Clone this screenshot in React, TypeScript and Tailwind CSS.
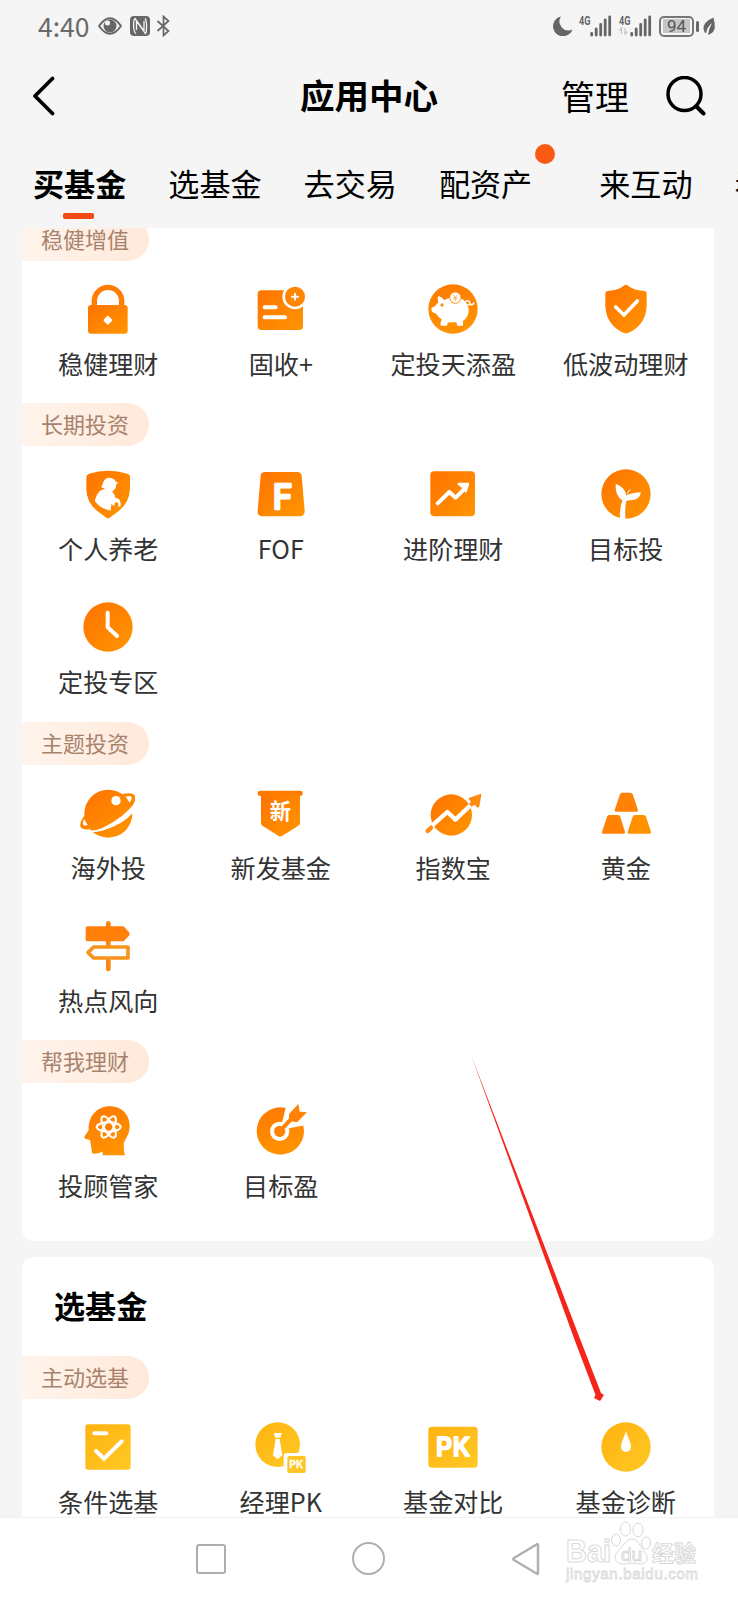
import React from 'react';

type Item = { label: string; icon: React.ReactNode };
type Section = { title: string; items: Item[] };

const ORANGE = 'url(#orange)';
const YELLOW = 'url(#yellow)';

/* ── Icons (all drawn around 0,0 in a 180 unit box) ─────────── */

const Icon = ({ children }: { children: React.ReactNode }) => (
  <svg viewBox="-90 -90 180 180" className="h-[60px] w-[60px] shrink-0 overflow-visible">
    {children}
  </svg>
);

const LockIcon = () => (
  <Icon>
    <path d="M-41 -4V-24a41 41 0 0 1 82 0V-4" fill="none" stroke="#ff7d05" strokeWidth="16" />
    <rect x="-60" y="-12" width="119" height="86" rx="9" fill={ORANGE} />
    <rect x="-11" y="23" width="21" height="21" rx="5" fill="#fff" transform="rotate(45 -0.5 33.5)" />
  </Icon>
);

const FixedIncomeIcon = () => (
  <Icon>
    <rect x="-70" y="-56" width="136" height="119" rx="11" fill={ORANGE} />
    <circle cx="42" cy="-37" r="38" fill="#fff" />
    <circle cx="42" cy="-37" r="30" fill="#ff8503" />
    <path d="M33 -37H51M42 -46V-28" stroke="#fff" strokeWidth="6" strokeLinecap="round" />
    <path d="M-49 -5H-16M-49 25H12" stroke="#fff" strokeWidth="12" strokeLinecap="round" />
  </Icon>
);

const PiggyIcon = () => (
  <Icon>
    <circle r="74" fill="url(#orangeDown)" />
    <path
      d="M-45 -39Q-35 -37 -26 -27Q-10 -36 8 -35Q34 -33 43 -12Q54 10 37 30L30 36L30 50H13L10 40H-10L-16 42L-18 50H-36L-38 44L-34 31Q-44 24 -50 15L-62 9Q-67 2 -64 -4L-54 -8Q-49 -15 -44 -20Q-47 -29 -45 -39Z"
      fill="#fff"
    />
    <path d="M38 -22Q46 -28 50 -20Q51 -12 44 -12M50 -14Q58 -11 63 -18" fill="none" stroke="#fff" strokeWidth="4.5" strokeLinecap="round" />
    <circle cx="-33" cy="-12" r="5" fill="#ff8a12" />
    <circle cx="7" cy="-34" r="17" fill="#fff" stroke="#ff8a12" strokeWidth="3" />
    <path d="M1 -42L7 -35L13 -42M7 -35V-25M1 -34H13M1 -30H13" fill="none" stroke="#ffab4a" strokeWidth="2.5" />
  </Icon>
);

const ShieldIcon = () => (
  <Icon>
    <path
      d="M-5 -71Q0 -74 5 -71Q20 -56 55 -54Q62 -53 62 -47V-10Q60 47 8 71Q0 75 -8 71Q-60 47 -62 -10V-47Q-62 -53 -55 -54Q-20 -56 -5 -71Z"
      fill={ORANGE}
    />
    <path d="M-31 -6L-6 18L34 -24" fill="none" stroke="#fff" strokeWidth="11" strokeLinecap="round" />
  </Icon>
);

const PensionIcon = () => (
  <Icon>
    <path
      d="M-57 -61Q0 -78 58 -61Q66 -59 66 -50V-14Q64 30 24 57L5 71Q0 74 -5 71L-24 57Q-64 30 -65 -14V-50Q-65 -58 -57 -61Z"
      fill={ORANGE}
    />
    <path
      d="M-20 -20L-15 -34Q-8 -51 9 -48Q20 -46 24 -37L32 -33L24 -29Q26 -17 18 -12L12 -7Q20 -2 22 12L31 14Q39 20 38 37L31 38V28L25 24L19 29V37L10 30L8 50L-6 46Q-28 38 -40 20Q-36 2 -24 -10L-9 -16Z"
      fill="#fff"
    />
  </Icon>
);

const FofIcon = () => (
  <Icon>
    <path
      d="M-48 -66H49Q60 -66 62 -55L71 50Q72 67 56 67H-56Q-72 67 -70 50L-61 -55Q-60 -66 -48 -66Z"
      fill={ORANGE}
    />
    <text
      x="5"
      y="45"
      textAnchor="middle"
      fill="#fff"
      stroke="#fff"
      strokeWidth="7"
      strokeLinejoin="round"
      className="font-['Inter','Noto_Sans',sans-serif] text-[101px] font-medium"
    >
      F
    </text>
  </Icon>
);

const TrendIcon = () => (
  <Icon>
    <rect x="-68" y="-68" width="134" height="135" rx="12" fill={ORANGE} />
    <path d="M-46 28L-11 -6L8 11L38 -19" fill="none" stroke="#fff" strokeWidth="12" strokeLinecap="round" strokeLinejoin="round" />
    <path d="M17 -30H45L38 -8L28 -22Z" fill="#fff" stroke="#fff" strokeWidth="7" strokeLinejoin="round" />
  </Icon>
);

const SproutIcon = () => (
  <Icon>
    <circle r="74" fill={ORANGE} />
    <path d="M-18 75Q-20 42 -10 18L2 18Q-5 44 -1 75Z" fill="#fff" />
    <path d="M-31 -31Q-34 6 -9 20Q0 21 2 7Q-2 -20 -31 -31Z" fill="#fff" />
    <path d="M45 -5Q41 19 14 19Q4 19 -3 22Q-6 2 12 0Q28 -5 45 -5Z" fill="#fff" />
    <path d="M4 -1Q6 -10 14 -13" fill="none" stroke="#fff" strokeWidth="3" />
  </Icon>
);

const ClockIcon = () => (
  <Icon>
    <circle r="74" fill={ORANGE} />
    <path d="M-1 -43V1L27 27" fill="none" stroke="#fff" strokeWidth="12" strokeLinecap="round" strokeLinejoin="round" />
  </Icon>
);

const PlanetIcon = () => (
  <Icon>
    <circle cx="1" cy="2" r="72" fill={ORANGE} />
    <path d="M-92 50Q-40 60 -4 38Q48 12 78 -30L92 -24Q62 24 15 41Q-20 56 -46 58L-92 66Z" fill="#fff" />
    <path
      d="M42 -56Q74 -64 81 -51Q86 -28 56 -5Q20 26 -26 43Q-66 54 -80 46Q-91 30 -66 2L-58 26L-62 36Q-20 34 28 4Q60 -18 70 -42L56 -44Z"
      fill={ORANGE}
    />
    <path d="M-72 18Q-78 31 -73 37Q-68 39 -61 36Z" fill="#fff" />
    <path d="M52 -49Q68 -53 71 -48Q73 -42 66 -34Q60 -42 52 -49Z" fill="#fff" />
    <circle cx="24" cy="-37" r="14" fill="#fff" />
  </Icon>
);

const NewIcon = () => (
  <Icon>
    <rect x="-70" y="-67" width="135" height="16" rx="8" fill="#ff7800" />
    <path d="M-60 -60H57V30Q57 35 52 38L3 69Q-2 72 -7 69L-56 38Q-60 35 -60 30Z" fill={ORANGE} />
    <text x="-2" y="17" textAnchor="middle" fill="#fff" className="text-[64px] font-bold">
      新
    </text>
  </Icon>
);

const IndexIcon = () => (
  <Icon>
    <circle cx="-5" cy="6" r="62" fill={ORANGE} />
    <path d="M-72 46L-17 -3L7 20L60 -30" fill="none" stroke="#fff" strokeWidth="13" strokeLinejoin="round" />
    <path d="M-76 54L-66 44" stroke="#ff8a10" strokeWidth="13" strokeLinecap="round" />
    <path d="M82 -57L49 -46Q45 -43 49 -39L54 -34L48 -27L56 -19L64 -25L72 -17Q78 -15 79 -20L85 -54Q85 -58 82 -57Z" fill="#ff8a10" />
  </Icon>
);

const GoldIcon = () => (
  <Icon>
    <path d="M-12 -61H13Q18 -61 20 -56L36 -9Q37 -4 32 -4H-30Q-35 -4 -34 -9L-18 -56Q-16 -61 -12 -61Z" fill="#ff8205" />
    <path d="M-51 6H-24Q-19 6 -17 11L-3 57Q-2 62 -7 62H-68Q-73 62 -72 57L-57 11Q-55 6 -51 6Z" fill="#ff8205" />
    <path d="M26 6H53Q58 6 60 11L75 57Q76 62 71 62H9Q4 62 5 57L20 11Q22 6 26 6Z" fill="#ff9000" />
  </Icon>
);

const SignpostIcon = () => (
  <Icon>
    <path d="M1 -68V-2M1 42V69" stroke="#fa8510" strokeWidth="14" strokeLinecap="round" />
    <path d="M-62 -59H47L63 -41Q67 -36 63 -31L47 -14H-62Q-67 -14 -67 -19V-54Q-67 -59 -62 -59Z" fill="#ff7f08" />
    <path d="M-43 3H60V36H-43L-60 20Z" fill="#fff" stroke="#f7941d" strokeWidth="11" strokeLinejoin="round" />
  </Icon>
);

const AdvisorIcon = () => (
  <Icon>
    <path
      d="M5 -74C45 -74 66 -45 65 -12C64 12 52 22 47 38Q46 55 51 73H-16V62Q-30 68 -43 68Q-49 67 -49 56L-54 27L-68 23Q-74 20 -70 16L-58 -2C-60 -45 -32 -74 5 -74Z"
      fill="url(#orangeDown)"
    />
    <g fill="none" stroke="#fff" strokeWidth="6" transform="translate(2 -12)">
      <ellipse rx="36" ry="14" />
      <ellipse rx="36" ry="14" transform="rotate(60)" />
      <ellipse rx="36" ry="14" transform="rotate(120)" />
    </g>
    <circle cx="2" cy="-12" r="9" fill="#ff8205" />
  </Icon>
);

const TargetIcon = () => (
  <Icon>
    <circle cx="-2" cy="0" r="71" fill="url(#orangeDown)" />
    <path d="M2 -20L16 -78L90 -30L72 -17L24 -8Z" fill="#fff" />
    <circle cx="-4" cy="1" r="29" fill="#fff" />
    <circle cx="-4" cy="1" r="17" fill="#ff8205" />
    <path d="M6 -9L26 -30" stroke="#fff" strokeWidth="24" />
    <path d="M-4 1L40 -46" stroke="#ff8205" strokeWidth="12" />
    <path d="M24 -30V-51L52 -81L56 -58L78 -56L48 -26Z" fill="#ff8205" />
  </Icon>
);

const ScreenIcon = () => (
  <Icon>
    <rect x="-68" y="-68" width="136" height="136" rx="9" fill={YELLOW} />
    <path d="M-41 -41H-5" stroke="#fff" strokeWidth="12" strokeLinecap="round" />
    <path d="M-36 12L-12 35L41 -17" fill="none" stroke="#fff" strokeWidth="12" strokeLinecap="round" />
  </Icon>
);

const ManagerIcon = () => (
  <Icon>
    <circle cx="-10" cy="-7" r="67" fill={YELLOW} />
    <path d="M-22 -42H2L-2 -28H-17ZM-16 -24H-4L4 25L-10 37L-24 25Z" fill="#fff" />
    <rect x="8" y="18" width="76" height="72" rx="10" fill="#fff" />
    <rect x="19" y="27" width="55" height="51" rx="5" fill="#ffc524" />
    <text
      x="46"
      y="64"
      textAnchor="middle"
      fill="#fff"
      stroke="#fff"
      className="font-['Inter','Noto_Sans',sans-serif] text-[31px] font-semibold"
    >
      PK
    </text>
  </Icon>
);

const ComparePkIcon = () => (
  <Icon>
    <rect x="-74" y="-61" width="148" height="123" rx="11" fill={YELLOW} />
    <text
      x="0"
      y="28"
      textAnchor="middle"
      textLength="102"
      fill="#fff"
      stroke="#fff"
      strokeWidth="6"
      strokeLinejoin="round"
      className="font-['Inter','Noto_Sans',sans-serif] text-[75px] font-medium"
    >
      PK
    </text>
  </Icon>
);

const DiagnoseIcon = () => (
  <Icon>
    <circle r="74" fill={YELLOW} />
    <path d="M0 -47C5 -30 15 -14 15 0A15 15 0 0 1 -15 0C-15 -14 -5 -30 0 -47Z" fill="#fff" />
  </Icon>
);

/* ── Data ───────────────────────────────────────────────────── */

const tabs = ['买基金', '选基金', '去交易', '配资产', '来互动', '看行情'];

const buySections: Section[] = [
  {
    title: '稳健增值',
    items: [
      { label: '稳健理财', icon: <LockIcon /> },
      { label: '固收+', icon: <FixedIncomeIcon /> },
      { label: '定投天添盈', icon: <PiggyIcon /> },
      { label: '低波动理财', icon: <ShieldIcon /> },
    ],
  },
  {
    title: '长期投资',
    items: [
      { label: '个人养老', icon: <PensionIcon /> },
      { label: 'FOF', icon: <FofIcon /> },
      { label: '进阶理财', icon: <TrendIcon /> },
      { label: '目标投', icon: <SproutIcon /> },
      { label: '定投专区', icon: <ClockIcon /> },
    ],
  },
  {
    title: '主题投资',
    items: [
      { label: '海外投', icon: <PlanetIcon /> },
      { label: '新发基金', icon: <NewIcon /> },
      { label: '指数宝', icon: <IndexIcon /> },
      { label: '黄金', icon: <GoldIcon /> },
      { label: '热点风向', icon: <SignpostIcon /> },
    ],
  },
  {
    title: '帮我理财',
    items: [
      { label: '投顾管家', icon: <AdvisorIcon /> },
      { label: '目标盈', icon: <TargetIcon /> },
    ],
  },
];

const pickSections: Section[] = [
  {
    title: '主动选基',
    items: [
      { label: '条件选基', icon: <ScreenIcon /> },
      { label: '经理PK', icon: <ManagerIcon /> },
      { label: '基金对比', icon: <ComparePkIcon /> },
      { label: '基金诊断', icon: <DiagnoseIcon /> },
    ],
  },
];

/* ── Parts ──────────────────────────────────────────────────── */

const Signal = ({ data }: { data?: boolean }) => (
  <svg viewBox="0 0 33 22" className="h-[22px] w-[33px] overflow-visible">
    <text x="0" y="9.5" textLength="11.5" lengthAdjust="spacingAndGlyphs" fill="#666" className="font-['Roboto',sans-serif] text-[12px] font-bold">
      4G
    </text>
    {data && <path d="M2.5 19V13L0.5 15.5M6 13V19L8.5 16.5" fill="none" stroke="#c4c4c4" strokeWidth="1.3" />}
    <path d="M12.700 18.500V20M17.200 14V20M21.700 9.500V20M26.200 5V20M30.700 2V20" stroke="#666" strokeWidth="2.8" strokeLinecap="round" />
  </svg>
);

const StatusBar = () => (
  <div className="flex h-[52px] shrink-0 items-center pl-[38px] pr-[23px] text-[#6a6a6a]">
    <span className="w-[60px] text-[26.5px] leading-none">4:40</span>
    <svg viewBox="0 0 24 18" className="h-[18px] w-6">
      <path d="M1 9Q12 -6.500 23 9Q12 24.500 1 9Z" fill="none" stroke="#666" strokeWidth="2" />
      <circle cx="12" cy="9" r="6.500" fill="#666" />
      <circle cx="9.500" cy="6" r="2.500" fill="#f5f5f5" />
    </svg>
    <svg viewBox="0 0 20 20" className="ml-2 h-5 w-5">
      <rect width="20" height="20" rx="4" fill="#666" />
      <path d="M6 17.500C3 16 3 4 5 2.500L14 15V5M15 2.500C17 5 17 15 15.500 17.500L6.500 5V14" fill="none" stroke="#f5f5f5" strokeWidth="1.300" />
    </svg>
    <svg viewBox="0 0 14 22" className="ml-[6px] h-[22px] w-[15px]">
      <path d="M1 6L12 16L7 20.500V1.500L12 6L1 16" fill="none" stroke="#666" strokeWidth="1.700" />
    </svg>
    <div className="ml-auto flex items-center">
      <svg viewBox="0 0 20 20" className="h-5 w-5">
        <path d="M8 0.500A10 10 0 1 0 19.500 13.500A9 9 0 0 1 8 0.500Z" fill="#666" />
      </svg>
      <div className="ml-[6px]"><Signal /></div>
      <div className="ml-[7px]"><Signal data /></div>
      <div className="ml-[7px] flex h-[21px] w-[35px] items-center justify-center rounded-[5px] border-2 border-[#777]">
        <span className="flex h-[14px] w-[27px] items-center justify-center bg-[#c6c6c6] font-['Roboto',sans-serif] text-[17px] leading-none text-[#555]">94</span>
      </div>
      <div className="ml-[2px] h-[11px] w-[3px] rounded bg-[#666]" />
      <svg viewBox="0 0 12 19" className="ml-1 h-[19px] w-3">
        <path d="M10.500 0.500Q0 5 0.500 12Q1 15 3 16.500Q4 10 9 6Q6 11 5 18Q11 16 11.800 11Q12 6 10.500 0.500Z" fill="#666" />
      </svg>
    </div>
  </div>
);

const Header = () => (
  <div className="flex h-[88px] shrink-0 items-center px-8">
    <svg viewBox="0 0 24 40" className="h-10 w-6">
      <path d="M20.500 2.500L3 20L20.500 37.500" fill="none" stroke="#000" strokeWidth="3.800" strokeLinecap="round" strokeLinejoin="round" />
    </svg>
    <h1 className="ml-[244px] w-[261px] pb-[3px] text-[34.500px] font-bold leading-none text-black">应用中心</h1>
    <span className="text-[34px] leading-none text-black">管理</span>
    <svg viewBox="0 0 40 40" className="ml-[37px] h-10 w-10 shrink-0">
      <circle cx="18.500" cy="18" r="16.500" fill="none" stroke="#000" strokeWidth="3.500" />
      <path d="M30.500 30.500L37.500 37.500" stroke="#000" strokeWidth="4" strokeLinecap="round" />
    </svg>
  </div>
);

const Tabs = () => (
  <div className="flex h-[88px] shrink-0 gap-[42px] overflow-hidden pl-[33px]">
    {tabs.map((tab, i) => (
      <div key={tab} className={`relative flex shrink-0 flex-col items-center pt-[21px] ${i === 4 ? 'ml-[25px]' : ''}`}>
        <span className={`text-[31.100px] leading-[44px] text-black ${i === 0 ? 'font-bold' : ''}`}>{tab}</span>
        {i === 0 && <span className="mr-[2px] mt-[8px] h-[6px] w-[31px] rounded-[2px] bg-[#f24a12]" />}
        {i === 3 && <span className="absolute right-[-23px] top-[4px] h-[20px] w-[20px] rounded-full bg-[#fa5a14]" />}
      </div>
    ))}
  </div>
);

const SectionBlock = ({ section }: { section: Section }) => (
  <section className="pb-px">
    <div className="flex h-[43px] w-[127px] items-center rounded-r-full bg-gradient-to-r from-[#fff4ec] to-[#ffe9da] pb-[3px] pl-[19px] text-[22px] leading-none text-[#a8826c]">
      {section.title}
    </div>
    <div className="grid grid-cols-4 pr-[2px] pt-[8px]">
      {section.items.map((item) => (
        <div key={item.label} className="flex h-[133.300px] flex-col items-center pt-[10px]">
          {item.icon}
          <span className="mt-[6px] whitespace-nowrap text-[25.100px] leading-9 text-[#333]">{item.label}</span>
        </div>
      ))}
    </div>
  </section>
);

const NavBar = () => (
  <nav className="relative flex h-[83px] shrink-0 items-center border-t border-[#f0f0f0] bg-white pb-px pl-[196px]">
    <span className="h-[30px] w-[30px] rounded-[3px] border-[2.5px] border-[#adadad]" />
    <span className="ml-[126px] h-[33px] w-[33px] rounded-full border-[2.5px] border-[#b0b0b0]" />
    <svg viewBox="0 0 30 34" className="ml-[126px] h-[34px] w-[30px]">
      <path d="M27 3V31Q27 32.500 25.500 31.500L3 18Q1.500 17 3 16L25.500 2.500Q27 1.500 27 3Z" fill="none" stroke="#b0b0b0" strokeWidth="2.500" />
    </svg>

    {/* Watermark */}
    <svg viewBox="0 0 140 68" className="absolute left-[562px] top-0 h-[68px] w-[140px]" fill="#fff" stroke="#d9d9d9" strokeWidth="1">
      <text x="4" y="44" textLength="45" lengthAdjust="spacingAndGlyphs" className="font-['Liberation_Sans',sans-serif] text-[31px] font-bold">Bai</text>
      <ellipse cx="54" cy="22" rx="4.500" ry="6" />
      <ellipse cx="63.500" cy="11" rx="5" ry="7" />
      <ellipse cx="76" cy="12" rx="5" ry="7" />
      <ellipse cx="84" cy="25" rx="4.500" ry="6" />
      <path d="M70 21C76 21 77 27 82 33C88 40 85 47 77 46Q70 44 62 46C54 47 50 40 56 33C62 27 64 21 70 21Z" />
      <text x="59" y="43" textLength="21" className="font-['Liberation_Sans',sans-serif] text-[19px]">du</text>
      <text x="90" y="42.500" textLength="44" className="text-[22px] font-bold">经验</text>
      <text x="4" y="61" textLength="132" strokeWidth="0.800" className="font-['Liberation_Sans',sans-serif] text-[15px]">jingyan.baidu.com</text>
    </svg>
  </nav>
);

const App = () => {
  return (
    <div className="relative flex h-[1600px] w-[738px] flex-col overflow-hidden bg-[#f5f5f5] font-['Noto_Sans_CJK_SC',sans-serif]">
      {/* Shared gradients */}
      <svg className="absolute h-0 w-0">
        <defs>
          <linearGradient id="orange" x1="0" y1="0" x2="1" y2="1">
            <stop offset="0.1" stopColor="#ff7600" />
            <stop offset="1" stopColor="#ff9600" />
          </linearGradient>
          <linearGradient id="orangeDown" x1="0" y1="0" x2="0.3" y2="1">
            <stop offset="0" stopColor="#ff7800" />
            <stop offset="1" stopColor="#ff9200" />
          </linearGradient>
          <linearGradient id="yellow" x1="0" y1="0" x2="1" y2="1">
            <stop offset="0" stopColor="#ffb20f" />
            <stop offset="1" stopColor="#ffc926" />
          </linearGradient>
        </defs>
      </svg>

      <StatusBar />
      <Header />
      <Tabs />

      {/* Scrolled list */}
      <main className="flex min-h-0 flex-1 flex-col gap-4 overflow-hidden pl-[22px] pr-6">
        <div className="mt-[-20px] h-[1033px] shrink-0 rounded-xl bg-white pt-[9.700px]">
          {buySections.map((section) => (
            <SectionBlock key={section.title} section={section} />
          ))}
        </div>
        <div className="shrink-0 rounded-xl bg-white">
          <h2 className="flex h-[99px] items-center pb-[3px] pl-8 text-[31.100px] font-bold leading-none text-black">选基金</h2>
          {pickSections.map((section) => (
            <SectionBlock key={section.title} section={section} />
          ))}
        </div>
      </main>

      <NavBar />

      {/* Pointer arrow */}
      <svg viewBox="0 0 140 350" className="absolute left-[468px] top-[1054px] h-[350px] w-[140px]">
        <path d="M3 1L112.500 286L133 339L136 341L132 347L126 344L127.500 341L107 287Z" fill="#f5251c" />
      </svg>
    </div>
  );
};

export default App;
